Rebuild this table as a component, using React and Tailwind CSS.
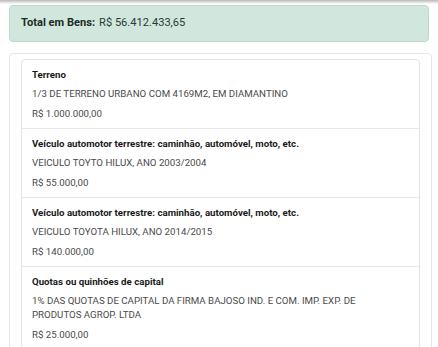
const bens = [
  {
    tipo: "Terreno",
    descricao: "1/3 DE TERRENO URBANO COM 4169M2, EM DIAMANTINO",
    valor: "R$ 1.000.000,00",
  },
  {
    tipo: "Veículo automotor terrestre: caminhão, automóvel, moto, etc.",
    descricao: "VEICULO TOYTO HILUX, ANO 2003/2004",
    valor: "R$ 55.000,00",
  },
  {
    tipo: "Veículo automotor terrestre: caminhão, automóvel, moto, etc.",
    descricao: "VEICULO TOYOTA HILUX, ANO 2014/2015",
    valor: "R$ 140.000,00",
  },
  {
    tipo: "Quotas ou quinhões de capital",
    descricao: "1% DAS QUOTAS DE CAPITAL DA FIRMA BAJOSO IND. E COM. IMP. EXP. DE PRODUTOS AGROP. LTDA",
    valor: "R$ 25.000,00",
  },
];

export default function App() {
  return (
    <div className="w-[438px] h-[347px] overflow-hidden bg-white font-['Roboto',sans-serif]">
      {/* sombra do cabeçalho */}
      <div className="h-[4px] bg-gradient-to-b from-[#b9b9b9] to-white" />
      <div className="px-[9px] pt-[1px]">
        <div className="h-[37px] flex items-center px-[11px] rounded-[4px] border border-[#badbcc] bg-[#d1e7dd] text-[11.1px] text-[#2a3a33]">
          <span className="font-bold text-[#1d2b25]">Total em Bens:</span>
          <span className="ml-[4px]">R$ 56.412.433,65</span>
        </div>

        <div className="mt-[11px] mr-[-3px] rounded-[4px] border border-[#e6e6e6] px-[11px] pt-[5px]">
          <ul className="rounded-[4px] border border-[#e3e3e3]">
            {bens.map((bem, i) => (
              <li
                key={i}
                className="px-[10px] pt-[5px] pb-[4.5px] border-b border-[#e8e8e8] last:border-b-0 text-[9.7px] leading-[19.5px]"
              >
                <div className="font-bold text-[#1a1a1a]">{bem.tipo}</div>
                <div className="max-w-[345px] text-[#4a4a4a] leading-[14px] py-[2.75px]">{bem.descricao}</div>
                <div className="text-[#4a4a4a]">{bem.valor}</div>
              </li>
            ))}
          </ul>
        </div>
      </div>
    </div>
  );
}
